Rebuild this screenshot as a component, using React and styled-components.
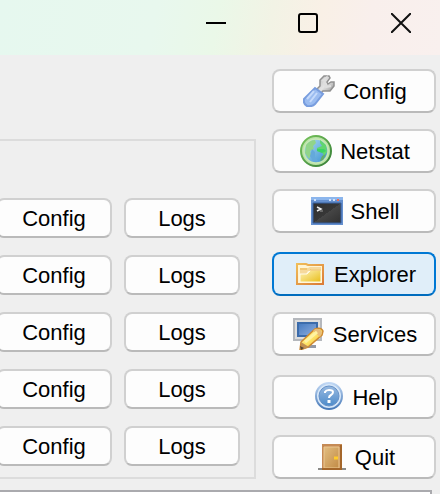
import React from "react";
import styled, { createGlobalStyle, css } from "styled-components";

const GlobalStyle = createGlobalStyle`
  * { box-sizing: border-box; }
  body {
    margin: 0;
    background: #efefef;
    color: #000;
    font-family: "Liberation Sans", Arial, sans-serif;
    font-size: 22px;
  }
`;

const Window = styled.div`
  display: flex;
  flex-direction: column;
  min-height: 100vh;
  overflow: hidden;
`;

const TitleBar = styled.header`
  display: flex;
  justify-content: flex-end;
  height: 55px;
  background: linear-gradient(100deg, #e6f8ef 0%, #e8f8ee 35%, #eaf8e8 49%, #f2f3e5 61%, #f9f0e6 72%, #f9efec 83%, #f9f0ee 100%);
`;

const CaptionButton = styled.button`
  display: grid;
  place-items: center;
  width: 92px;
  height: 46px;
  padding: 0;
  border: 0;
  background: transparent;

  &:last-child {
    width: 86px;
    padding-left: 8px;
  }
`;

const Content = styled.main`
  display: flex;
  gap: 16px;
  padding: 14px 4px 11px 0;
`;

const ModulesPanel = styled.section`
  flex: 1;
  min-width: 0;
  margin-top: 70px;
  padding: 57px 14px 10px 0;
  border: solid #dcdcdc;
  border-width: 2px 2px 2px 0;
`;

const ModuleRows = styled.div`
  display: grid;
  grid-template-columns: minmax(0, 1fr);
  gap: 17px;
`;

const ModuleRow = styled.div`
  display: flex;
  justify-content: flex-end;
  gap: 12px;
`;

const buttonFrame = css`
  display: flex;
  align-items: center;
  justify-content: center;
  gap: 8px;
  padding: 0;
  border: 2px solid #d0d0d0;
  border-bottom-color: #bababa;
  border-radius: 8px;
  background: #fdfdfd;
  color: #000;
  font: inherit;
  line-height: 26px;
  white-space: nowrap;
`;

const ModuleButton = styled.button`
  ${buttonFrame}
  flex: none;
  width: 116px;
  height: 40px;
  padding-top: 2px;
`;

const Sidebar = styled.nav`
  display: flex;
  flex-direction: column;
  flex: none;
  gap: 19px;
  width: 164px;
`;

const SidebarGroup = styled.div`
  display: grid;
  gap: 16px;
`;

const SidebarButton = styled.button`
  ${buttonFrame}
  height: 44px;
  padding-left: 2px;
  ${({ $active }) => $active && css`
    border-color: #0078d4;
    border-bottom-color: #006cbe;
    background: #e0eef9;
  `}
`;

const ButtonLabel = styled.span`
  padding-top: 2px;
`;

const Icon = styled.svg`
  flex: none;
  width: 32px;
  height: 32px;
`;

const LogArea = styled.section`
  flex: 1;
  margin-right: 8px;
  border: solid #aaaaae;
  border-width: 2px 2px 0 0;
  background: #fff;
`;

const WrenchIcon = () => (
  <Icon viewBox="0 0 32 32" aria-hidden="true">
    <defs>
      <linearGradient id="wrenchMetal" x1="0" y1="0" x2="1" y2="1">
        <stop stopColor="#b7b7b7" /><stop offset=".5" stopColor="#e4e4e4" /><stop offset="1" stopColor="#858585" />
      </linearGradient>
    </defs>
    <path d="M14 14l3-3V5l4-4 5 0 1 2-3 4 1 2 3-2h3l0 4-4 5-7 0-3 3z" fill="url(#wrenchMetal)" stroke="#919191" strokeWidth="1.5" />
    <path d="M12 13l8 6-8 10q-3 3-8 2-4-2-3-7z" fill="#9bbcf0" stroke="#789dde" strokeWidth="2" />
    <path d="M11 16L4 24M14 18l-7 9" fill="none" stroke="#c5dafb" strokeWidth="2" />
    <path d="M19 6l4-3-2 5 2 4 5-1" fill="none" stroke="#dedede" strokeWidth="2" />
  </Icon>
);

const GlobeIcon = () => (
  <Icon viewBox="0 0 32 32" aria-hidden="true">
    <defs>
      <linearGradient id="globeRing" x1="0" y1="0" x2="1" y2="1">
        <stop stopColor="#78c65c" /><stop offset="1" stopColor="#347c35" />
      </linearGradient>
      <linearGradient id="globeSea" x1="0" y1="0" x2="1" y2="1">
        <stop stopColor="#b1def0" /><stop offset="1" stopColor="#388fd3" />
      </linearGradient>
    </defs>
    <circle cx="16" cy="16" r="15" fill="#b8e1a5" stroke="url(#globeRing)" strokeWidth="2" />
    <circle cx="16" cy="16" r="12" fill="url(#globeSea)" stroke="#c8e9b5" strokeWidth="1.5" />
    <path d="M6 10q4-5 9-5l1 3-3 3 1 3-4 2 1 4-2 4-4-6z" fill="#91d489" />
    <path d="M20 5l6 5 1 7-3 4-2-4-5-1v-3l5-2-2-3z" fill="#61d56f" />
    <path d="M17 14h7l2 2-4 2-5-2z" fill="#3bd462" />
    <path d="M12 14l3 3v5l4 5-6-1-3-5z" fill="#64a9db" />
    <path d="M22 21l4-2-3 6-3 1z" fill="#65ae65" />
  </Icon>
);

const TerminalIcon = () => (
  <Icon viewBox="0 0 32 32" aria-hidden="true">
    <defs>
      <linearGradient id="terminalScreen" x1="0" y1="0" x2="1" y2="1">
        <stop stopColor="#2e2e2e" /><stop offset=".5" stopColor="#373737" /><stop offset=".5" stopColor="#464646" /><stop offset="1" stopColor="#303030" />
      </linearGradient>
    </defs>
    <path d="M0 2h32v28H0z" fill="#648fce" />
    <path d="M0 2h32v3H0z" fill="#8bb5ec" />
    <path d="M2 8h28v20H2z" fill="url(#terminalScreen)" stroke="#375f9d" strokeWidth="1" />
    <path d="M3 5h2M18 5h2M22 5h2" stroke="#d0e2fa" strokeWidth="2" />
    <path d="M26 5h2" stroke="#f06d56" strokeWidth="2" />
    <path d="M6 12l4 2-4 2" fill="none" stroke="#ededed" strokeWidth="1.5" />
    <path d="M9 16h3" stroke="#9b9b9b" strokeWidth="1" />
  </Icon>
);

const FolderIcon = () => (
  <Icon viewBox="0 0 32 32" aria-hidden="true">
    <defs>
      <linearGradient id="folderFront" x1="0" y1="0" x2="1" y2="1">
        <stop stopColor="#fff4bd" /><stop offset="1" stopColor="#e8bd18" />
      </linearGradient>
      <linearGradient id="folderEdge" x1="0" y1="0" x2="1" y2="1">
        <stop stopColor="#f0bd59" /><stop offset="1" stopColor="#db7c37" />
      </linearGradient>
    </defs>
    <path d="M3 6h9l2 1h15v19H3z" fill="#fff4d3" stroke="url(#folderEdge)" strokeWidth="2" />
    <path d="M6 10h8l2-1h11v4H14l-2 3H6z" fill="#f6d99c" />
    <path d="M6 16h7l4-4h10v12H6z" fill="url(#folderFront)" stroke="#fffbe7" strokeWidth="1" />
    <path d="M6 11h7M16 12h11" stroke="#eeb64c" strokeWidth="1" />
  </Icon>
);

const ServicesIcon = () => (
  <Icon viewBox="0 0 32 32" aria-hidden="true">
    <defs>
      <linearGradient id="monitorScreen" x1="0" y1="0" x2="1" y2="1">
        <stop stopColor="#4379bf" /><stop offset="1" stopColor="#91afe0" />
      </linearGradient>
      <linearGradient id="pencilBody" x1="0" y1="0" x2="1" y2="1">
        <stop stopColor="#fff4a3" /><stop offset=".5" stopColor="#ffe465" /><stop offset="1" stopColor="#dc9934" />
      </linearGradient>
    </defs>
    <path d="M8 23h11v4h4v3H7v-3h3z" fill="#9298a5" />
    <path d="M1 1h27v21H1z" fill="#dedede" stroke="#b5b8bd" strokeWidth="2" />
    <path d="M5 5h19v13H5z" fill="url(#monitorScreen)" stroke="#3c6cab" strokeWidth="2" />
    <path d="M8 24L22 11q6-2 8 2l-1 4-14 12-8 3z" fill="url(#pencilBody)" stroke="#cf8a31" strokeWidth="1.5" />
    <path d="M22 11q6-1 7 4l-2 4-7-6z" fill="#e8bd79" />
    <path d="M8 24l8 5-8 3z" fill="#c18f51" />
    <path d="M7 28l4 2-3 2z" fill="#554735" />
    <path d="M12 24l12-10" stroke="#fff3a2" strokeWidth="3" />
  </Icon>
);

const HelpIcon = () => (
  <Icon viewBox="0 0 32 32" aria-hidden="true">
    <defs>
      <linearGradient id="helpRing" x1="0" y1="0" x2="0" y2="1">
        <stop stopColor="#c1d8f4" /><stop offset="1" stopColor="#4779b8" />
      </linearGradient>
      <linearGradient id="helpFace" x1="0" y1="0" x2="0" y2="1">
        <stop stopColor="#98b9e0" /><stop offset="1" stopColor="#4d8bca" />
      </linearGradient>
    </defs>
    <circle cx="17" cy="15" r="13" fill="#d5e6f8" stroke="url(#helpRing)" strokeWidth="2" />
    <circle cx="17" cy="15" r="10" fill="url(#helpFace)" stroke="#6792c8" />
    <path d="M13 12v-1q1-2 4-2 4 0 4 2 0 2-2 3-2 1-2 3" fill="none" stroke="#fff" strokeWidth="2" />
    <path d="M17 19v3" stroke="#fff" strokeWidth="3" />
  </Icon>
);

const DoorIcon = () => (
  <Icon viewBox="0 0 32 32" aria-hidden="true">
    <defs>
      <linearGradient id="doorWood" x1="0" y1="0" x2="1" y2="1">
        <stop stopColor="#e2bd80" /><stop offset="1" stopColor="#c28b46" />
      </linearGradient>
    </defs>
    <path d="M3 27h28v2H3z" fill="#8a8a88" />
    <path d="M7 3h20v26H7z" fill="#c58a55" />
    <path d="M9 6h15v21H9z" fill="url(#doorWood)" stroke="#ecc892" />
    <path d="M26 4v24H7" fill="none" stroke="#a4662a" strokeWidth="2" />
    <path d="M19 17h4" stroke="#ffcb2b" strokeWidth="3" />
  </Icon>
);

const sidebarGroups = [
  [
    { label: "Config", Glyph: WrenchIcon },
    { label: "Netstat", Glyph: GlobeIcon },
    { label: "Shell", Glyph: TerminalIcon },
  ],
  [
    { label: "Explorer", Glyph: FolderIcon, active: true },
    { label: "Services", Glyph: ServicesIcon },
  ],
  [
    { label: "Help", Glyph: HelpIcon },
    { label: "Quit", Glyph: DoorIcon },
  ],
];

const modules = [1, 2, 3, 4, 5];

export default function App() {
  return (
    <Window>
      <GlobalStyle />
      <TitleBar>
        <CaptionButton aria-label="Minimize">
          <svg width="20" height="20" viewBox="0 0 20 20"><path d="M0 10h20" stroke="#000" strokeWidth="2" /></svg>
        </CaptionButton>
        <CaptionButton aria-label="Maximize">
          <svg width="20" height="20" viewBox="0 0 20 20"><rect x="1" y="1" width="18" height="18" rx="2" fill="none" stroke="#000" strokeWidth="2" /></svg>
        </CaptionButton>
        <CaptionButton aria-label="Close">
          <svg width="20" height="20" viewBox="0 0 20 20"><path d="M0 0l20 20M20 0L0 20" stroke="#111" strokeWidth="2" /></svg>
        </CaptionButton>
      </TitleBar>
      <Content>
        <ModulesPanel>
          <ModuleRows>
            {modules.map((id) => (
              <ModuleRow key={id}>
                <ModuleButton>Config</ModuleButton>
                <ModuleButton>Logs</ModuleButton>
              </ModuleRow>
            ))}
          </ModuleRows>
        </ModulesPanel>
        <Sidebar>
          {sidebarGroups.map((group) => (
            <SidebarGroup key={group[0].label}>
              {group.map(({ label, Glyph, active }) => (
                <SidebarButton key={label} $active={active}>
                  <Glyph />
                  <ButtonLabel>{label}</ButtonLabel>
                </SidebarButton>
              ))}
            </SidebarGroup>
          ))}
        </Sidebar>
      </Content>
      <LogArea aria-label="Log" />
    </Window>
  );
}
